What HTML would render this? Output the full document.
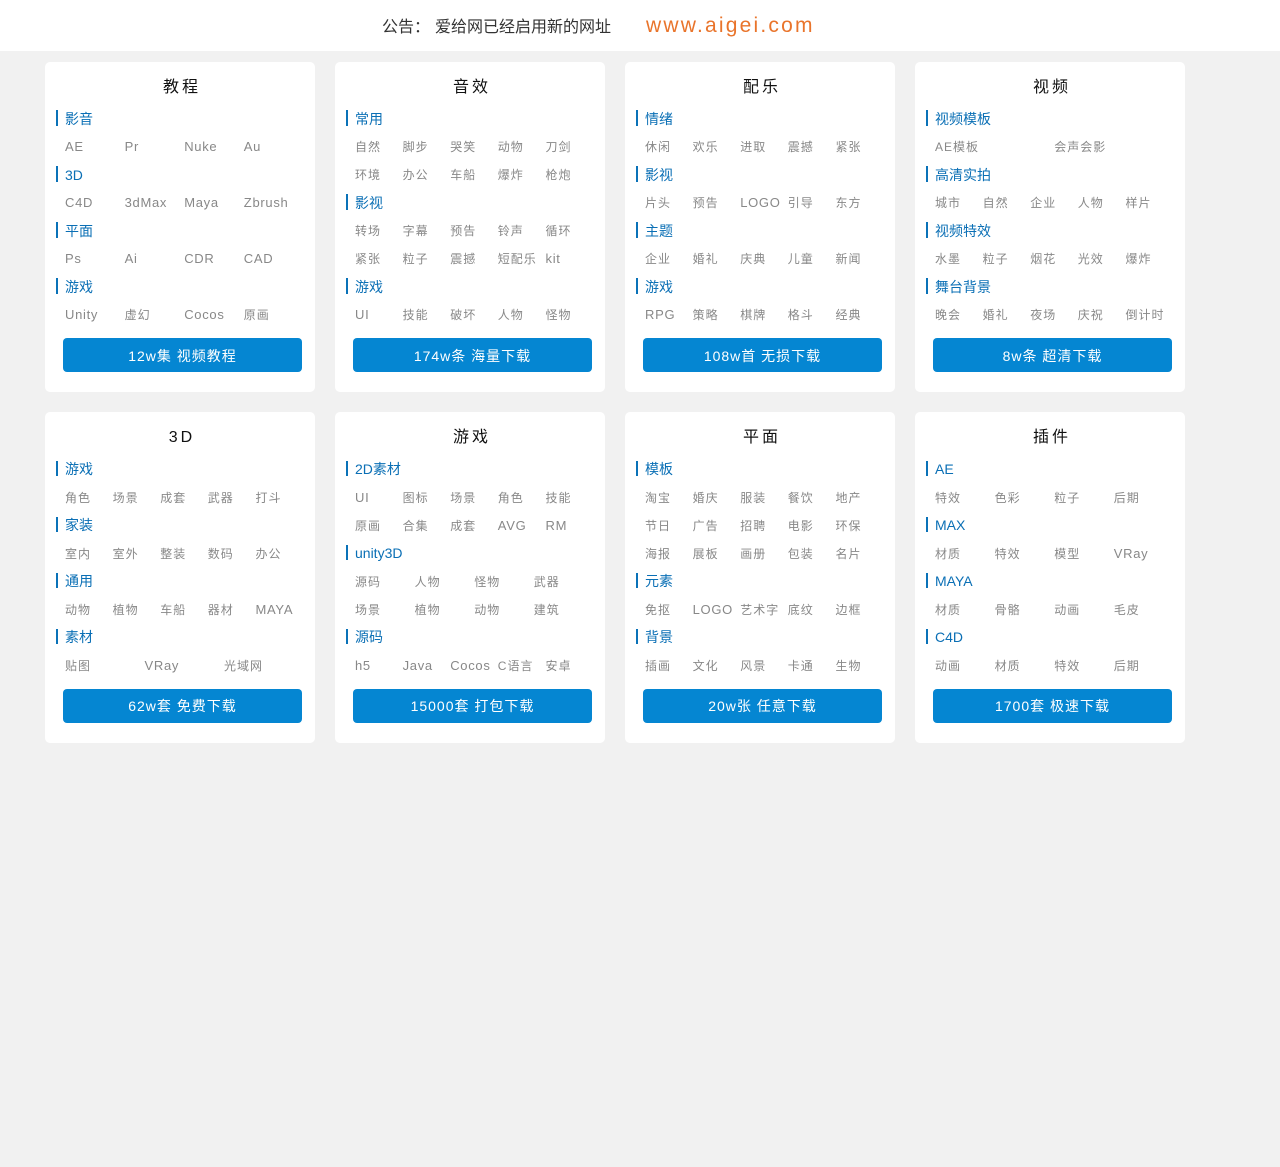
<!DOCTYPE html>
<html lang="zh"><head><meta charset="utf-8"><title>爱给网</title>
<style>
html,body{margin:0;padding:0;background:#f1f1f1;}
body{position:relative;width:1280px;height:1167px;overflow:hidden;font-family:"Liberation Sans","Noto Sans CJK SC",sans-serif;}
.top{position:absolute;left:0;top:0;width:1280px;height:51px;background:#fff;}
.n1{position:absolute;left:382px;top:15px;font-size:16px;line-height:26px;color:#333;white-space:nowrap;}
.n2{position:absolute;left:435px;top:15px;font-size:16px;line-height:26px;color:#333;white-space:nowrap;}
.n3{position:absolute;left:646px;top:13px;font-size:21px;line-height:26px;color:#e9742b;letter-spacing:2.2px;white-space:nowrap;}
.c{position:absolute;width:270px;background:#fff;border-radius:5px;}
.t{position:absolute;left:1px;top:14px;width:272px;text-align:center;font-size:16px;line-height:24px;letter-spacing:3px;color:#111;}
.h{position:absolute;left:20px;height:16px;line-height:18px;font-size:14px;color:#0a6fb5;white-space:nowrap;}
.h:before{content:"";position:absolute;left:-9px;top:0;width:2.4px;height:16px;background:#0a72b8;}
.c2 .h{line-height:16px;}
.c2 .h:before{height:15px;}
.r{position:absolute;left:20px;height:16px;line-height:18px;font-size:12px;letter-spacing:1px;color:#888;white-space:nowrap;}
.r span{position:absolute;top:0;}
.r span.l{font-size:13px;letter-spacing:.7px;}
.r5 span:nth-child(1){left:0}.r5 span:nth-child(2){left:47.6px}.r5 span:nth-child(3){left:95.2px}.r5 span:nth-child(4){left:142.8px}.r5 span:nth-child(5){left:190.5px}
.r4 span:nth-child(1){left:0}.r4 span:nth-child(2){left:59.6px}.r4 span:nth-child(3){left:119.2px}.r4 span:nth-child(4){left:178.8px}
.b{position:absolute;left:18px;width:239px;height:34px;line-height:34px;background:#0586d2;border-radius:4px;color:#fff;font-size:14px;letter-spacing:1px;text-align:center;white-space:nowrap;}
.c1 .b{line-height:36px;}
</style></head><body>
<div class="top"></div>
<div class="n1">公告：</div><div class="n2">爱给网已经启用新的网址</div><div class="n3">www.aigei.com</div>

<div class="c c1" style="left:45px;top:62px;height:330px"><div class="t">教程</div>
<div class="h" style="top:48px">影音</div><div class="r r4" style="top:76px"><span class="l">AE</span><span class="l">Pr</span><span class="l">Nuke</span><span class="l">Au</span></div>
<div class="h" style="top:104px">3D</div><div class="r r4" style="top:132px"><span class="l">C4D</span><span class="l">3dMax</span><span class="l">Maya</span><span class="l">Zbrush</span></div>
<div class="h" style="top:160px">平面</div><div class="r r4" style="top:188px"><span class="l">Ps</span><span class="l">Ai</span><span class="l">CDR</span><span class="l">CAD</span></div>
<div class="h" style="top:216px">游戏</div><div class="r r4" style="top:244px"><span class="l">Unity</span><span>虚幻</span><span class="l">Cocos</span><span>原画</span></div>
<div class="b" style="top:276px">12w集 视频教程</div></div>

<div class="c c1" style="left:335px;top:62px;height:330px"><div class="t">音效</div>
<div class="h" style="top:48px">常用</div><div class="r r5" style="top:76px"><span>自然</span><span>脚步</span><span>哭笑</span><span>动物</span><span>刀剑</span></div>
<div class="r r5" style="top:104px"><span>环境</span><span>办公</span><span>车船</span><span>爆炸</span><span>枪炮</span></div>
<div class="h" style="top:132px">影视</div><div class="r r5" style="top:160px"><span>转场</span><span>字幕</span><span>预告</span><span>铃声</span><span>循环</span></div>
<div class="r r5" style="top:188px"><span>紧张</span><span>粒子</span><span>震撼</span><span>短配乐</span><span class="l">kit</span></div>
<div class="h" style="top:216px">游戏</div><div class="r r5" style="top:244px"><span class="l">UI</span><span>技能</span><span>破坏</span><span>人物</span><span>怪物</span></div>
<div class="b" style="top:276px">174w条 海量下载</div></div>

<div class="c c1" style="left:625px;top:62px;height:330px"><div class="t">配乐</div>
<div class="h" style="top:48px">情绪</div><div class="r r5" style="top:76px"><span>休闲</span><span>欢乐</span><span>进取</span><span>震撼</span><span>紧张</span></div>
<div class="h" style="top:104px">影视</div><div class="r r5" style="top:132px"><span>片头</span><span>预告</span><span class="l">LOGO</span><span>引导</span><span>东方</span></div>
<div class="h" style="top:160px">主题</div><div class="r r5" style="top:188px"><span>企业</span><span>婚礼</span><span>庆典</span><span>儿童</span><span>新闻</span></div>
<div class="h" style="top:216px">游戏</div><div class="r r5" style="top:244px"><span class="l">RPG</span><span>策略</span><span>棋牌</span><span>格斗</span><span>经典</span></div>
<div class="b" style="top:276px">108w首 无损下载</div></div>

<div class="c c1" style="left:915px;top:62px;height:330px"><div class="t">视频</div>
<div class="h" style="top:48px">视频模板</div><div class="r r4" style="top:76px"><span>AE模板</span><span></span><span>会声会影</span></div>
<div class="h" style="top:104px">高清实拍</div><div class="r r5" style="top:132px"><span>城市</span><span>自然</span><span>企业</span><span>人物</span><span>样片</span></div>
<div class="h" style="top:160px">视频特效</div><div class="r r5" style="top:188px"><span>水墨</span><span>粒子</span><span>烟花</span><span>光效</span><span>爆炸</span></div>
<div class="h" style="top:216px">舞台背景</div><div class="r r5" style="top:244px"><span>晚会</span><span>婚礼</span><span>夜场</span><span>庆祝</span><span>倒计时</span></div>
<div class="b" style="top:276px">8w条 超清下载</div></div>

<div class="c c2" style="left:45px;top:412px;height:331px"><div class="t">3D</div>
<div class="h" style="top:49px">游戏</div><div class="r r5" style="top:77px"><span>角色</span><span>场景</span><span>成套</span><span>武器</span><span>打斗</span></div>
<div class="h" style="top:105px">家装</div><div class="r r5" style="top:133px"><span>室内</span><span>室外</span><span>整装</span><span>数码</span><span>办公</span></div>
<div class="h" style="top:161px">通用</div><div class="r r5" style="top:189px"><span>动物</span><span>植物</span><span>车船</span><span>器材</span><span class="l">MAYA</span></div>
<div class="h" style="top:217px">素材</div><div class="r" style="top:245px"><span style="left:0">贴图</span><span class="l" style="left:79.5px">VRay</span><span style="left:159px">光域网</span></div>
<div class="b" style="top:277px">62w套 免费下载</div></div>

<div class="c c2" style="left:335px;top:412px;height:331px"><div class="t">游戏</div>
<div class="h" style="top:49px">2D素材</div><div class="r r5" style="top:77px"><span class="l">UI</span><span>图标</span><span>场景</span><span>角色</span><span>技能</span></div>
<div class="r r5" style="top:105px"><span>原画</span><span>合集</span><span>成套</span><span class="l">AVG</span><span class="l">RM</span></div>
<div class="h" style="top:133px">unity3D</div><div class="r r4" style="top:161px"><span>源码</span><span>人物</span><span>怪物</span><span>武器</span></div>
<div class="r r4" style="top:189px"><span>场景</span><span>植物</span><span>动物</span><span>建筑</span></div>
<div class="h" style="top:217px">源码</div><div class="r r5" style="top:245px"><span class="l">h5</span><span class="l">Java</span><span class="l">Cocos</span><span>C语言</span><span>安卓</span></div>
<div class="b" style="top:277px">15000套 打包下载</div></div>

<div class="c c2" style="left:625px;top:412px;height:331px"><div class="t">平面</div>
<div class="h" style="top:49px">模板</div><div class="r r5" style="top:77px"><span>淘宝</span><span>婚庆</span><span>服装</span><span>餐饮</span><span>地产</span></div>
<div class="r r5" style="top:105px"><span>节日</span><span>广告</span><span>招聘</span><span>电影</span><span>环保</span></div>
<div class="r r5" style="top:133px"><span>海报</span><span>展板</span><span>画册</span><span>包装</span><span>名片</span></div>
<div class="h" style="top:161px">元素</div><div class="r r5" style="top:189px"><span>免抠</span><span class="l">LOGO</span><span>艺术字</span><span>底纹</span><span>边框</span></div>
<div class="h" style="top:217px">背景</div><div class="r r5" style="top:245px"><span>插画</span><span>文化</span><span>风景</span><span>卡通</span><span>生物</span></div>
<div class="b" style="top:277px">20w张 任意下载</div></div>

<div class="c c2" style="left:915px;top:412px;height:331px"><div class="t">插件</div>
<div class="h" style="top:49px">AE</div><div class="r r4" style="top:77px"><span>特效</span><span>色彩</span><span>粒子</span><span>后期</span></div>
<div class="h" style="top:105px">MAX</div><div class="r r4" style="top:133px"><span>材质</span><span>特效</span><span>模型</span><span class="l">VRay</span></div>
<div class="h" style="top:161px">MAYA</div><div class="r r4" style="top:189px"><span>材质</span><span>骨骼</span><span>动画</span><span>毛皮</span></div>
<div class="h" style="top:217px">C4D</div><div class="r r4" style="top:245px"><span>动画</span><span>材质</span><span>特效</span><span>后期</span></div>
<div class="b" style="top:277px">1700套 极速下载</div></div>
</body></html>
